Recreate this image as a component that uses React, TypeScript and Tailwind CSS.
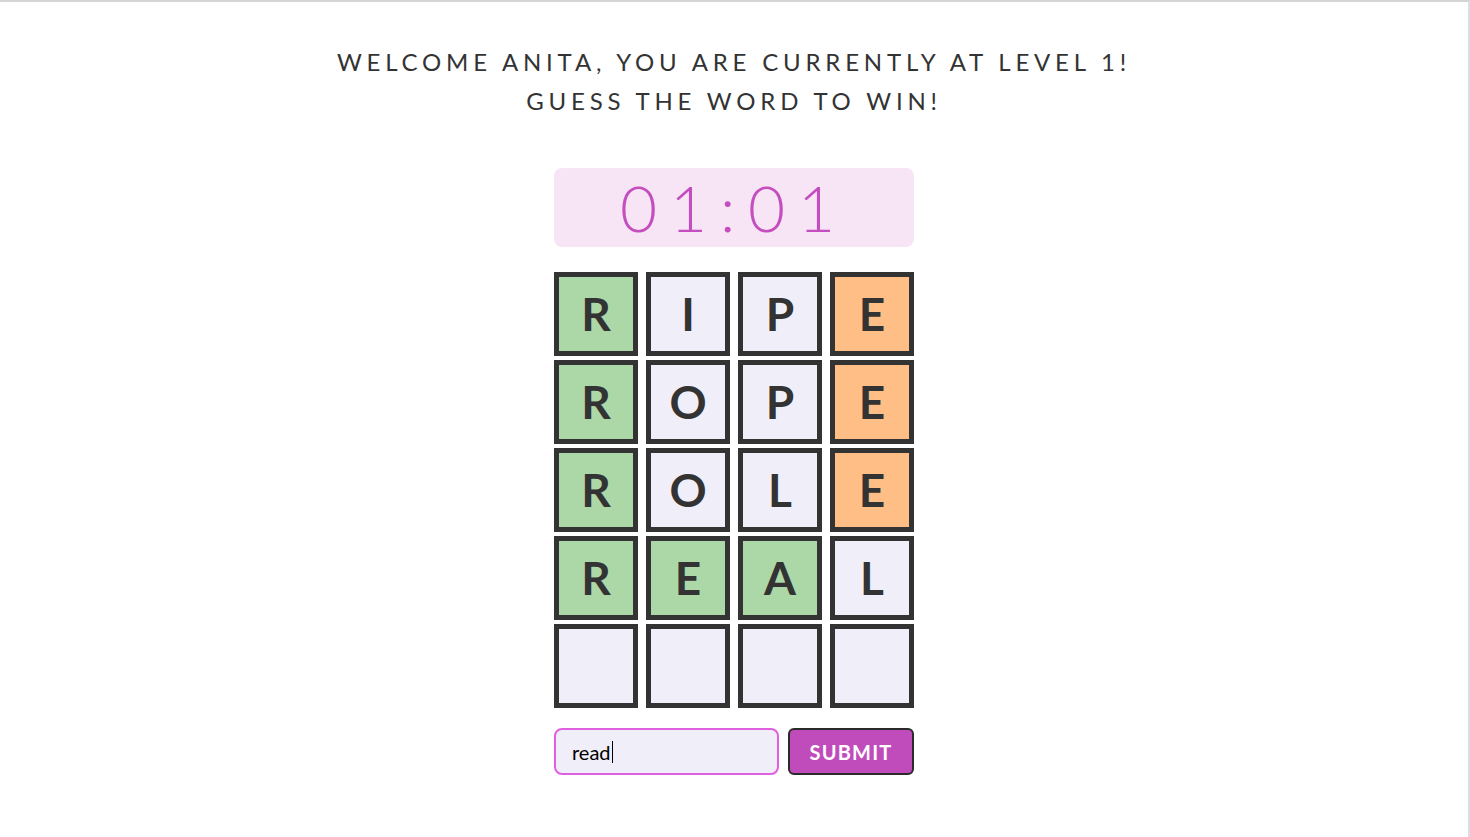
const rows: { l: string; c: string }[][] = [
  [
    { l: 'R', c: 'g' },
    { l: 'I', c: 'n' },
    { l: 'P', c: 'n' },
    { l: 'E', c: 'o' },
  ],
  [
    { l: 'R', c: 'g' },
    { l: 'O', c: 'n' },
    { l: 'P', c: 'n' },
    { l: 'E', c: 'o' },
  ],
  [
    { l: 'R', c: 'g' },
    { l: 'O', c: 'n' },
    { l: 'L', c: 'n' },
    { l: 'E', c: 'o' },
  ],
  [
    { l: 'R', c: 'g' },
    { l: 'E', c: 'g' },
    { l: 'A', c: 'g' },
    { l: 'L', c: 'n' },
  ],
  [
    { l: '', c: 'n' },
    { l: '', c: 'n' },
    { l: '', c: 'n' },
    { l: '', c: 'n' },
  ],
];

const bg: Record<string, string> = {
  g: 'bg-[#acd8a8]',
  o: 'bg-[#ffbe85]',
  n: 'bg-[#f0eff9]',
};

export default function App() {
  return (
    <div className="min-h-[837px] w-full bg-white font-['Lato',sans-serif] text-[#333] border-t-2 border-r-2 border-t-[#d4d4d4] border-r-[#dcdce4]">
      <div className="flex flex-col items-center pt-[40px]">
        {/* Heading */}
        <h1 className="text-center text-[24px] leading-[39px] tracking-[0.2em] font-normal">
          WELCOME ANITA, YOU ARE CURRENTLY AT LEVEL 1!
          <br />
          GUESS THE WORD TO WIN!
        </h1>

        {/* Timer */}
        <div className="mt-[48px] w-[360px] h-[79px] rounded-lg bg-[#f7e5f5] flex items-center justify-center">
          <span className="text-[64px] font-light tracking-[0.2em] text-[#c44ebf] leading-none">
            01:01
          </span>
        </div>

        {/* Board */}
        <div className="mt-[25px] flex flex-col gap-[4px]">
          {rows.map((row, i) => (
            <div key={i} className="flex gap-[8px]">
              {row.map((t, j) => (
                <div
                  key={j}
                  className={`w-[84px] h-[84px] border-[5px] border-[#333] ${bg[t.c]} flex items-center justify-center text-[46px] font-bold text-[#333] leading-none`}
                >
                  {t.l}
                </div>
              ))}
            </div>
          ))}
        </div>

        {/* Input */}
        <div className="mt-[20px] flex gap-[9px]">
          <div className="w-[225px] h-[47px] rounded-lg border-2 border-[#e060e0] bg-[#f0eff9] flex items-center px-[16px] text-[20px] text-black">
            read<span className="inline-block w-px h-[22px] bg-black ml-px" />
          </div>
          <button className="w-[126px] h-[47px] rounded-md border-2 border-[#2a2a2a] bg-[#c04cbc] text-white text-[20px] font-bold tracking-[0.06em]">
            SUBMIT
          </button>
        </div>
      </div>
    </div>
  );
}
